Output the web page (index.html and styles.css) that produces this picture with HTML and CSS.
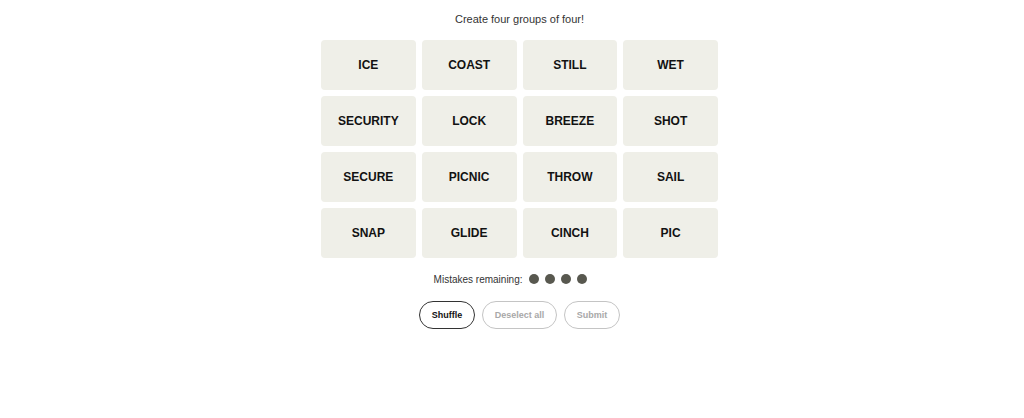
FILE: index.html
```html
<!DOCTYPE html>
<html lang="en">
<head>
<meta charset="utf-8">
<title>Connections</title>
<link rel="stylesheet" href="styles.css">
</head>
<body>
<main class="game">
  <p class="prompt">Create four groups of four!</p>
  <div class="board">
    <button class="tile">ICE</button>
    <button class="tile">COAST</button>
    <button class="tile">STILL</button>
    <button class="tile">WET</button>
    <button class="tile">SECURITY</button>
    <button class="tile">LOCK</button>
    <button class="tile">BREEZE</button>
    <button class="tile">SHOT</button>
    <button class="tile">SECURE</button>
    <button class="tile">PICNIC</button>
    <button class="tile">THROW</button>
    <button class="tile">SAIL</button>
    <button class="tile">SNAP</button>
    <button class="tile">GLIDE</button>
    <button class="tile">CINCH</button>
    <button class="tile">PIC</button>
  </div>
  <div class="mistakes">
    <span class="mistakes-label">Mistakes remaining:</span>
    <span class="dots">
      <span class="dot"></span>
      <span class="dot"></span>
      <span class="dot"></span>
      <span class="dot"></span>
    </span>
  </div>
  <div class="actions">
    <button class="pill pill-active">Shuffle</button>
    <button class="pill">Deselect all</button>
    <button class="pill">Submit</button>
  </div>
</main>
</body>
</html>
```
FILE: styles.css
```css
html, body {
  margin: 0;
  padding: 0;
  background: #fff;
}

body {
  font-family: "Liberation Sans", Arial, sans-serif;
  color: #121212;
}

.game {
  display: flex;
  flex-direction: column;
  align-items: center;
  padding-left: 15px;
}

.prompt {
  margin: 12px 0 0;
  font-size: 11px;
  line-height: 15px;
  color: #333;
}

.board {
  margin-top: 13px;
  display: grid;
  grid-template-columns: repeat(4, 94.75px);
  grid-auto-rows: 50px;
  gap: 6px;
}

.tile {
  border: none;
  border-radius: 4px;
  background: #efefe8;
  font-family: "Liberation Sans", Arial, sans-serif;
  font-weight: 700;
  font-size: 12px;
  color: #121212;
  padding: 0;
  text-transform: uppercase;
}

.mistakes {
  margin-top: 13px;
  height: 16px;
  display: flex;
  align-items: center;
  gap: 6px;
  font-size: 10px;
  color: #333;
  padding-right: 18px;
}

.dots {
  display: flex;
  gap: 6.3px;
}

.dot {
  width: 10px;
  height: 10px;
  border-radius: 50%;
  background: #58584f;
}

.actions {
  margin-top: 14px;
  display: flex;
  gap: 6.5px;
}

.pill {
  height: 28px;
  padding: 0 12px;
  border-radius: 14px;
  border: 1px solid #c4c4c4;
  background: #fff;
  font-family: "Liberation Sans", Arial, sans-serif;
  font-size: 9px;
  font-weight: 600;
  color: #a8a8a8;
}

.pill-active {
  border-color: #333;
  color: #121212;
  font-weight: 700;
}
```
